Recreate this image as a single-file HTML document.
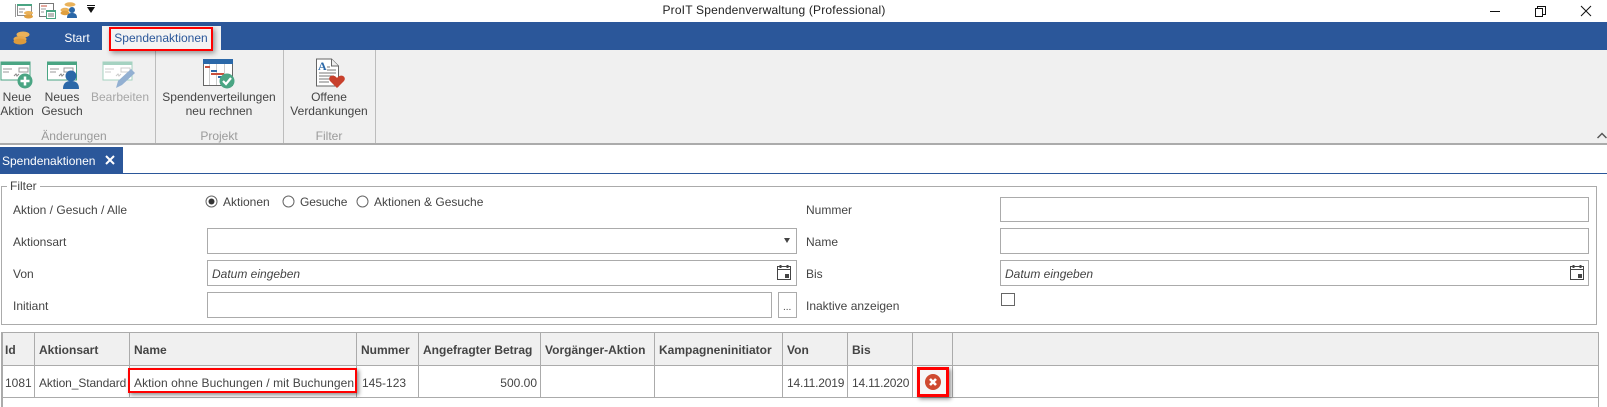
<!DOCTYPE html>
<html><head><meta charset="utf-8"><style>
html,body{margin:0;padding:0}
body{width:1607px;height:407px;overflow:hidden;background:#fff;position:relative;font-family:"Liberation Sans",sans-serif;font-size:12px;color:#444}
.a,.t,.i,svg{position:absolute}
.t{white-space:nowrap;line-height:16px}
.c{text-align:center;transform:translateX(-50%)}
.i{box-sizing:border-box;border:1px solid #ababab;background:#fff}
.h{font-weight:bold;color:#444}
.v{background:#ababab;width:1px}
.g{color:#9a9a9a}
.em{font-style:italic;color:#444}
.r{box-sizing:border-box;position:absolute;border:2px solid #f00;box-shadow:2px 2px 4px rgba(0,0,0,.45)}
</style></head><body>

<!-- quick access -->
<svg style="left:15px;top:3px" width="19" height="16" viewBox="0 0 19 16"><path d="M0.500 1v13" stroke="#999"/><rect x="2.500" y="1.500" width="14" height="11" fill="#fff" stroke="#8a8a8a"/><rect x="2" y="1" width="15" height="2" fill="#4aa583"/><path d="M4 6h6M4 9h4" stroke="#888"/><ellipse cx="13.500" cy="10" rx="4.500" ry="2" fill="#eab25a"/><ellipse cx="13.500" cy="13.500" rx="4.500" ry="2" fill="#e0a040"/></svg>
<svg style="left:39px;top:3px" width="17" height="16" viewBox="0 0 17 16"><rect x="0.500" y="0.500" width="14" height="13" fill="#fff" stroke="#777"/><path d="M2 3h6" stroke="#c8503c"/><path d="M2 6h5M2 9h3" stroke="#999"/><rect x="7.500" y="7.500" width="9" height="8" fill="#fff" stroke="#4aa583"/><path d="M7 8h10" stroke="#4aa583" stroke-width="2"/><path d="M9 11h6M9 13h6" stroke="#777"/></svg>
<svg style="left:60px;top:1px" width="18" height="18" viewBox="0 0 18 18"><ellipse cx="10" cy="3.500" rx="5.500" ry="2.200" fill="#eab25a"/><ellipse cx="5" cy="9" rx="4.500" ry="2.200" fill="#eab25a"/><ellipse cx="5" cy="12" rx="4.500" ry="2.200" fill="#e0a040"/><circle cx="12" cy="9" r="3" fill="#2b68a8"/><path d="M7 17c0-4 2-5 5-5s5 1 5 5z" fill="#2b68a8"/></svg>
<svg style="left:87px;top:5px" width="9" height="8" viewBox="0 0 9 8"><rect x="0" y="0" width="8" height="1" fill="#111"/><path d="M0 2h8L4 8z" fill="#111"/></svg>
<div class="t c" style="left:774px;top:2px;color:#222;font-size:12px;letter-spacing:.19px">ProIT Spendenverwaltung (Professional)</div>

<!-- window controls -->
<svg style="left:1490px;top:5px" width="117" height="17" viewBox="0 0 117 17"><path d="M0 6.500h10" stroke="#111"/><path d="M47.500 3.500v-2h8v8h-3M45.500 3.500h7v8h-7z" fill="none" stroke="#111"/><path d="M91 1l10 10M101 1L91 11" stroke="#111" fill="none"/></svg>

<!-- blue bar -->
<div class="a" style="left:0;top:22px;width:1607px;height:28px;background:#2b579a"></div>
<svg style="left:13px;top:31px" width="17" height="14" viewBox="0 0 17 14"><ellipse cx="10" cy="3.500" rx="6.500" ry="3" fill="#eab25a"/><ellipse cx="7" cy="8" rx="6.500" ry="3" fill="#e6a94e"/><ellipse cx="7" cy="10.500" rx="6.500" ry="3" fill="#dd9b3c"/></svg>
<div class="t c" style="left:77px;top:30px;color:#fff">Start</div>
<div class="a" style="left:102px;top:26px;width:119px;height:24px;background:#f3f3f3"></div>
<div class="t c" style="left:161px;top:30px;color:#2b579a">Spendenaktionen</div>
<div class="r" style="left:109px;top:27px;width:104px;height:24px;box-shadow:2px 2px 5px rgba(0,0,0,.4);z-index:3"></div>

<!-- ribbon -->
<div class="a" style="left:0;top:50px;width:1607px;height:93px;background:#f0f0f0"></div>
<div class="a" style="left:0;top:143px;width:1607px;height:2px;background:#ababab"></div>
<div class="a v" style="left:155px;top:50px;height:93px;background:#bdbdbd"></div>
<div class="a v" style="left:283px;top:50px;height:93px;background:#bdbdbd"></div>
<div class="a v" style="left:375px;top:50px;height:93px;background:#bdbdbd"></div>

<!-- Neue Aktion -->
<svg style="left:0;top:61px" width="33" height="28" viewBox="0 0 33 28"><rect x="1" y="1" width="29" height="18" fill="#fff" stroke="#4aa583"/><rect x="1" y="1" width="29" height="3" fill="#4aa583"/><path d="M3 8h9M3 11h6M19 7h9v4h-9z" fill="none" stroke="#999"/><path d="M14 15l2-2 1 2 2-2" stroke="#888" fill="none"/><circle cx="25" cy="20" r="7.500" fill="#4aa583"/><path d="M25 15.500v9M20.500 20h9" stroke="#fff" stroke-width="2.500"/></svg>
<div class="t c" style="left:17px;top:90px;line-height:14px;text-align:center">Neue<br>Aktion</div>
<!-- Neues Gesuch -->
<svg style="left:47px;top:61px" width="33" height="29" viewBox="0 0 33 29"><rect x="0.500" y="1" width="29" height="18" fill="#fff" stroke="#4aa583"/><rect x="0.500" y="1" width="29" height="3" fill="#4aa583"/><path d="M3 8h9M3 11h6M17 7h9v4h-9z" fill="none" stroke="#999"/><path d="M12 15l2-2 1 2 2-2" stroke="#888" fill="none"/><circle cx="24" cy="15" r="5.500" fill="#2b68a8"/><path d="M16 28c0-6 3-8 8-8s8 2 8 8z" fill="#2b68a8"/></svg>
<div class="t c" style="left:62px;top:90px;line-height:14px;text-align:center">Neues<br>Gesuch</div>
<!-- Bearbeiten -->
<svg style="left:102px;top:61px" width="34" height="29" viewBox="0 0 34 29"><rect x="1" y="1" width="29" height="18" fill="#fff" stroke="#a5d2c1"/><rect x="1" y="1" width="29" height="3" fill="#a5d2c1"/><path d="M3 8h9M3 11h6M19 7h9v4h-9z" fill="none" stroke="#ccc"/><path d="M14 15l2-2 1 2 2-2" stroke="#ccc" fill="none"/><path d="M14 27l2-7 13-12 4 4-13 12z" fill="#93b0d2"/></svg>
<div class="t c g" style="left:120px;top:90px;line-height:14px;color:#a6a6a6">Bearbeiten</div>
<div class="t c g" style="left:74px;top:128px">Änderungen</div>

<!-- Spendenverteilungen -->
<svg style="left:203px;top:59px" width="32" height="30" viewBox="0 0 32 30"><rect x="0.500" y="0.500" width="29" height="26" fill="#fff" stroke="#666"/><rect x="0" y="0" width="30" height="5" fill="#2b68a8"/><path d="M6.500 5v21M13.500 5v21M21.500 5v21" stroke="#ccc"/><rect x="2" y="7" width="5" height="2" fill="#c8503c"/><rect x="8" y="11" width="6" height="2" fill="#2b68a8"/><rect x="8" y="14" width="13" height="2" fill="#c8503c"/><rect x="15" y="17" width="4" height="2" fill="#2b68a8"/><circle cx="24" cy="22" r="7.500" fill="#4aa583"/><path d="M20 22l3 3 5-6" stroke="#fff" stroke-width="2.200" fill="none"/></svg>
<div class="t c" style="left:219px;top:90px;line-height:14px;text-align:center">Spendenverteilungen<br>neu rechnen</div>
<div class="t c g" style="left:219px;top:128px">Projekt</div>

<!-- Offene -->
<svg style="left:315px;top:58px" width="30" height="31" viewBox="0 0 30 31"><path d="M1.500 1h15l7 7v20h-22z" fill="#fff" stroke="#666"/><path d="M16.500 1v7h7" fill="#eee" stroke="#666"/><text x="3" y="12" font-family="Liberation Serif,serif" font-size="12" fill="#2b68a8" font-weight="bold">A</text><path d="M12 9h3M12 12h9M4 15h17M4 18h15M4 21h12M4 24h10" stroke="#777"/><path d="M22 30l-7-7c-3-4 3-8 7-3 4-5 10-1 7 3z" fill="#c8402c"/></svg>
<div class="t c" style="left:329px;top:90px;line-height:14px;text-align:center">Offene<br>Verdankungen</div>
<div class="t c g" style="left:329px;top:128px">Filter</div>

<svg style="left:1597px;top:132px" width="10" height="7" viewBox="0 0 10 7"><path d="M0.500 6L5 1.500 9.500 6" fill="none" stroke="#555" stroke-width="1.500"/></svg>

<!-- doc tab -->
<div class="a" style="left:0;top:147px;width:123px;height:26px;background:#2b579a"></div>
<div class="a" style="left:0;top:173px;width:1607px;height:1px;background:#2b579a"></div>
<div class="t" style="left:2px;top:153px;color:#fff">Spendenaktionen</div>
<svg style="left:105px;top:155px" width="10" height="10" viewBox="0 0 10 10"><path d="M1 1l8 8M9 1L1 9" stroke="#fff" stroke-width="2"/></svg>

<!-- filter -->
<div class="a" style="left:1px;top:186px;width:1596px;height:139px;box-sizing:border-box;border:1px solid #ababab"></div>
<div class="t" style="left:7px;top:178px;background:#fff;padding:0 3px 0 3px">Filter</div>
<div class="t" style="left:13px;top:202px">Aktion / Gesuch / Alle</div>
<div class="t" style="left:13px;top:234px">Aktionsart</div>
<div class="t" style="left:13px;top:266px">Von</div>
<div class="t" style="left:13px;top:298px">Initiant</div>

<svg style="left:205px;top:195px" width="14" height="14" viewBox="0 0 14 14"><circle cx="6.500" cy="6.500" r="5.500" fill="#fff" stroke="#666"/><circle cx="6.500" cy="6.500" r="3" fill="#333"/></svg>
<div class="t" style="left:223px;top:194px">Aktionen</div>
<svg style="left:282px;top:195px" width="14" height="14" viewBox="0 0 14 14"><circle cx="6.500" cy="6.500" r="5.500" fill="#fff" stroke="#666"/></svg>
<div class="t" style="left:300px;top:194px;letter-spacing:-.1px">Gesuche</div>
<svg style="left:356px;top:195px" width="14" height="14" viewBox="0 0 14 14"><circle cx="6.500" cy="6.500" r="5.500" fill="#fff" stroke="#666"/></svg>
<div class="t" style="left:374px;top:194px">Aktionen &amp; Gesuche</div>

<div class="i" style="left:207px;top:228px;width:590px;height:26px"></div>
<svg style="left:784px;top:238px" width="6" height="5" viewBox="0 0 6 5"><path d="M0 0h6L3 5z" fill="#444"/></svg>
<div class="i" style="left:207px;top:260px;width:590px;height:26px"></div>
<div class="t em" style="left:212px;top:266px">Datum eingeben</div>
<svg style="left:777px;top:264px" width="15" height="17" viewBox="0 0 15 17"><path d="M0.500 2.500h13v13h-13z" fill="#fff" stroke="#444"/><path d="M0.500 5.500h13" stroke="#444"/><path d="M3.500 1v3M10.500 1v3" stroke="#444" stroke-width="2"/><rect x="8" y="10" width="4" height="4" fill="#444"/></svg>
<div class="i" style="left:207px;top:292px;width:565px;height:26px"></div>
<div class="i" style="left:778px;top:292px;width:19px;height:26px"></div>
<div class="t" style="left:783px;top:300px;font-size:10px">...</div>

<div class="t" style="left:806px;top:202px">Nummer</div>
<div class="t" style="left:806px;top:234px">Name</div>
<div class="t" style="left:806px;top:266px">Bis</div>
<div class="t" style="left:806px;top:298px">Inaktive anzeigen</div>

<div class="i" style="left:1000px;top:197px;width:589px;height:25px"></div>
<div class="i" style="left:1000px;top:228px;width:589px;height:26px"></div>
<div class="i" style="left:1000px;top:260px;width:589px;height:26px"></div>
<div class="t em" style="left:1005px;top:266px">Datum eingeben</div>
<svg style="left:1570px;top:264px" width="15" height="17" viewBox="0 0 15 17"><path d="M0.500 2.500h13v13h-13z" fill="#fff" stroke="#444"/><path d="M0.500 5.500h13" stroke="#444"/><path d="M3.500 1v3M10.500 1v3" stroke="#444" stroke-width="2"/><rect x="8" y="10" width="4" height="4" fill="#444"/></svg>
<div class="i" style="left:1001px;top:293px;width:14px;height:13px;border-color:#666"></div>

<!-- table -->
<div class="a" style="left:1px;top:332px;width:1597px;height:33px;background:#f0f0f0"></div>
<div class="a" style="left:1px;top:332px;width:1598px;height:1px;background:#ababab"></div>
<div class="a" style="left:1px;top:365px;width:1598px;height:1px;background:#ababab"></div>
<div class="a" style="left:1px;top:397px;width:1598px;height:1px;background:#ababab"></div>
<div class="a v" style="left:1px;top:332px;height:75px;width:2px"></div>
<div class="a v" style="left:1598px;top:332px;height:75px"></div>
<div class="a v" style="left:34px;top:332px;height:66px"></div>
<div class="a v" style="left:129px;top:332px;height:66px"></div>
<div class="a v" style="left:356px;top:332px;height:66px"></div>
<div class="a v" style="left:418px;top:332px;height:66px"></div>
<div class="a v" style="left:540px;top:332px;height:66px"></div>
<div class="a v" style="left:654px;top:332px;height:66px"></div>
<div class="a v" style="left:782px;top:332px;height:66px"></div>
<div class="a v" style="left:847px;top:332px;height:66px"></div>
<div class="a v" style="left:912px;top:332px;height:66px"></div>
<div class="a v" style="left:952px;top:332px;height:66px"></div>

<div class="t h" style="left:5px;top:342px">Id</div>
<div class="t h" style="left:39px;top:342px">Aktionsart</div>
<div class="t h" style="left:134px;top:342px">Name</div>
<div class="t h" style="left:361px;top:342px">Nummer</div>
<div class="t h" style="left:423px;top:342px">Angefragter Betrag</div>
<div class="t h" style="left:545px;top:342px">Vorgänger-Aktion</div>
<div class="t h" style="left:659px;top:342px">Kampagneninitiator</div>
<div class="t h" style="left:787px;top:342px">Von</div>
<div class="t h" style="left:852px;top:342px">Bis</div>

<div class="t" style="left:5px;top:375px">1081</div>
<div class="t" style="left:39px;top:375px;letter-spacing:-.1px">Aktion_Standard</div>
<div class="t" style="left:134px;top:375px;letter-spacing:.07px">Aktion ohne Buchungen / mit Buchungen</div>
<div class="t" style="left:362px;top:375px">145-123</div>
<div class="t" style="right:1070px;top:375px">500.00</div>
<div class="t" style="left:787px;top:375px;letter-spacing:-.2px">14.11.2019</div>
<div class="t" style="left:852px;top:375px;letter-spacing:-.2px">14.11.2020</div>

<div class="r" style="left:128px;top:368px;width:229px;height:25px"></div>
<div class="r" style="left:917px;top:367px;width:32px;height:30px;border-width:3px;background:#f6f6f6"></div>
<svg style="left:925px;top:374px" width="16" height="16" viewBox="0 0 16 16"><circle cx="8" cy="8" r="8" fill="#cf4a30"/><path d="M5 5l6 6M11 5l-6 6" stroke="#fff" stroke-width="2.600"/></svg>
</body></html>
